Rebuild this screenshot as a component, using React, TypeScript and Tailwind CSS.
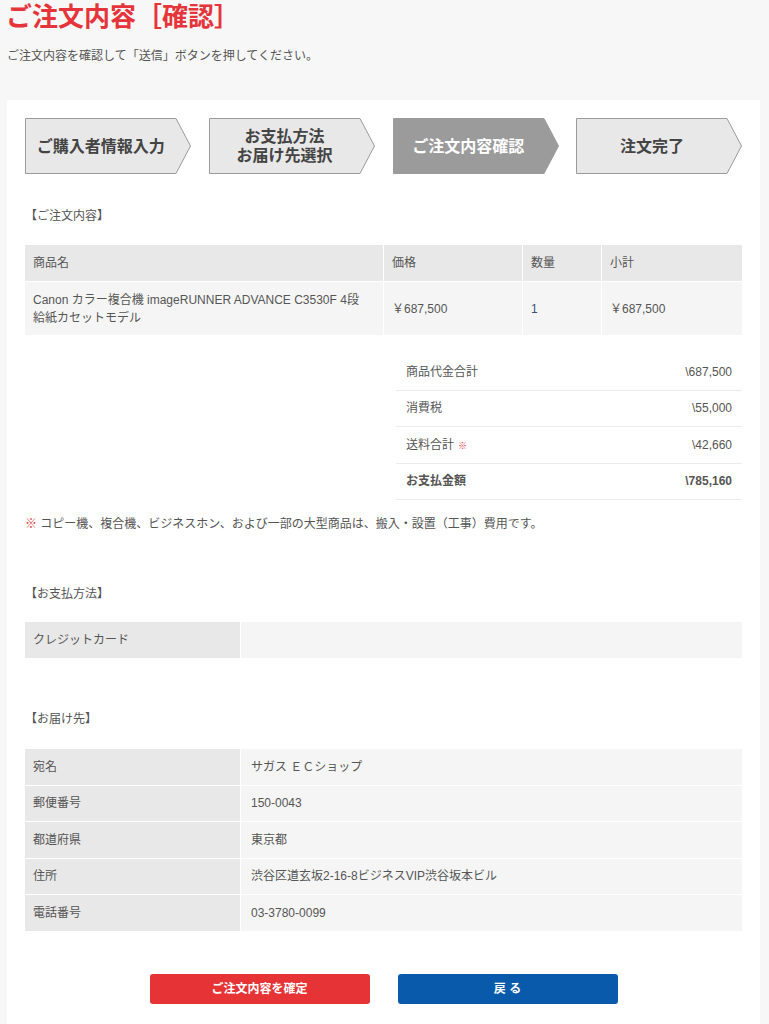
const font = {
  fontFamily: '"Liberation Sans", "Noto Sans CJK JP", sans-serif',
};

const steps = [
  { label: ["ご購入者情報入力"], active: false },
  { label: ["お支払方法", "お届け先選択"], active: false },
  { label: ["ご注文内容確認"], active: true },
  { label: ["注文完了"], active: false },
];

function Step({ label, active }: { label: string[]; active: boolean }) {
  return (
    <div className="relative flex h-[56px] w-[166px] items-center justify-center pr-[14px]">
      <svg
        className="absolute inset-0"
        width="166"
        height="56"
        viewBox="0 0 166 56"
      >
        <polygon
          points="0.5,0.5 151,0.5 165.5,28 151,55.5 0.5,55.5"
          fill={active ? "#9b9b9b" : "#e8e8e8"}
          stroke={active ? "#9b9b9b" : "#9a9a9a"}
          strokeWidth="1"
        />
      </svg>
      <div
        className={`relative text-center text-[16px] leading-[19px] font-bold ${
          active ? "text-white" : "text-[#444]"
        }`}
      >
        {label.map((l) => (
          <div key={l}>{l}</div>
        ))}
      </div>
    </div>
  );
}

const delivery = [
  ["宛名", "サガス ＥＣショップ"],
  ["郵便番号", "150-0043"],
  ["都道府県", "東京都"],
  ["住所", "渋谷区道玄坂2-16-8ビジネスVIP渋谷坂本ビル"],
  ["電話番号", "03-3780-0099"],
];

const totals = [
  ["商品代金合計", "\\687,500", false, false],
  ["消費税", "\\55,000", false, false],
  ["送料合計", "\\42,660", false, true],
  ["お支払金額", "\\785,160", true, false],
] as const;

export default function App() {
  return (
    <div className="min-h-[1024px] bg-[#f7f7f7] text-[#555]" style={font}>
      <h1 className="px-[6px] pt-[1px] text-[26px] leading-[32px] font-bold text-[#e6353a]">
        ご注文内容［確認］
      </h1>
      <p className="mt-[16px] px-[7px] text-[12px] leading-[14px] text-[#555]">
        ご注文内容を確認して「送信」ボタンを押してください。
      </p>

      <div className="mt-[37px] ml-[7px] w-[753px] bg-white px-[18px] pt-[18px] pb-[40px]">
        <div className="flex gap-[18px]">
          {steps.map((s) => (
            <Step key={s.label[0]} label={s.label} active={s.active} />
          ))}
        </div>

        <div className="mt-[35px] text-[12px] leading-[14px]">【ご注文内容】</div>

        <div className="mt-[22px] text-[12px] leading-[18px]">
          <div className="flex gap-px bg-white">
            <div className="flex h-[36px] w-[358px] items-center bg-[#e8e8e8] px-[8px]">商品名</div>
            <div className="flex h-[36px] w-[138px] items-center bg-[#e8e8e8] px-[8px]">価格</div>
            <div className="flex h-[36px] w-[78px] items-center bg-[#e8e8e8] px-[8px]">数量</div>
            <div className="flex h-[36px] flex-1 items-center bg-[#e8e8e8] px-[8px]">小計</div>
          </div>
          <div className="mt-px flex gap-px">
            <div className="flex h-[53px] w-[358px] items-center bg-[#f5f5f5] pr-[16px] pl-[8px]">
              Canon カラー複合機 imageRUNNER ADVANCE C3530F 4段給紙カセットモデル
            </div>
            <div className="flex h-[53px] w-[138px] items-center bg-[#f5f5f5] px-[8px]">￥687,500</div>
            <div className="flex h-[53px] w-[78px] items-center bg-[#f5f5f5] px-[8px] text-[#3d4f7a]">1</div>
            <div className="flex h-[53px] flex-1 items-center bg-[#f5f5f5] px-[8px]">￥687,500</div>
          </div>
        </div>

        <div className="mt-[19px] ml-auto w-[346px] text-[12px]">
          {totals.map(([label, value, bold, mark]) => (
            <div
              key={label}
              className={`flex h-[36.5px] items-center justify-between border-b border-[#ebebeb] px-[10px] ${
                bold ? "font-bold" : ""
              }`}
            >
              <span>
                {label}
                {mark && <span className="ml-[4px] text-[9px] font-bold text-[#e6353a]">※</span>}
              </span>
              <span>{value}</span>
            </div>
          ))}
        </div>

        <p className="mt-[17px] text-[12px] leading-[14px]">
          <span className="text-[#e6353a]">※</span> コピー機、複合機、ビジネスホン、および一部の大型商品は、搬入・設置（工事）費用です。
        </p>

        <div className="mt-[56px] text-[12px] leading-[14px]">【お支払方法】</div>
        <div className="mt-[21px] flex gap-px text-[12px]">
          <div className="flex h-[36px] w-[215px] items-center bg-[#e8e8e8] px-[8px]">クレジットカード</div>
          <div className="flex h-[36px] flex-1 items-center bg-[#f5f5f5] px-[8px]"></div>
        </div>

        <div className="mt-[54px] text-[12px] leading-[14px]">【お届け先】</div>
        <div className="mt-[23px] flex flex-col gap-px text-[12px]">
          {delivery.map(([k, v]) => (
            <div key={k} className="flex gap-px">
              <div className="flex h-[35.5px] w-[215px] items-center bg-[#e8e8e8] px-[8px]">{k}</div>
              <div className="flex h-[35.5px] flex-1 items-center bg-[#f5f5f5] px-[10px]">{v}</div>
            </div>
          ))}
        </div>

        <div className="mt-[43px] flex justify-center gap-[28px]">
          <button className="h-[30px] w-[220px] rounded-[3px] bg-[#e63336] text-[12px] font-bold text-white">
            ご注文内容を確定
          </button>
          <button className="h-[30px] w-[220px] rounded-[3px] bg-[#0a5aab] text-[12px] font-bold text-white">
            戻 る
          </button>
        </div>
      </div>
    </div>
  );
}
